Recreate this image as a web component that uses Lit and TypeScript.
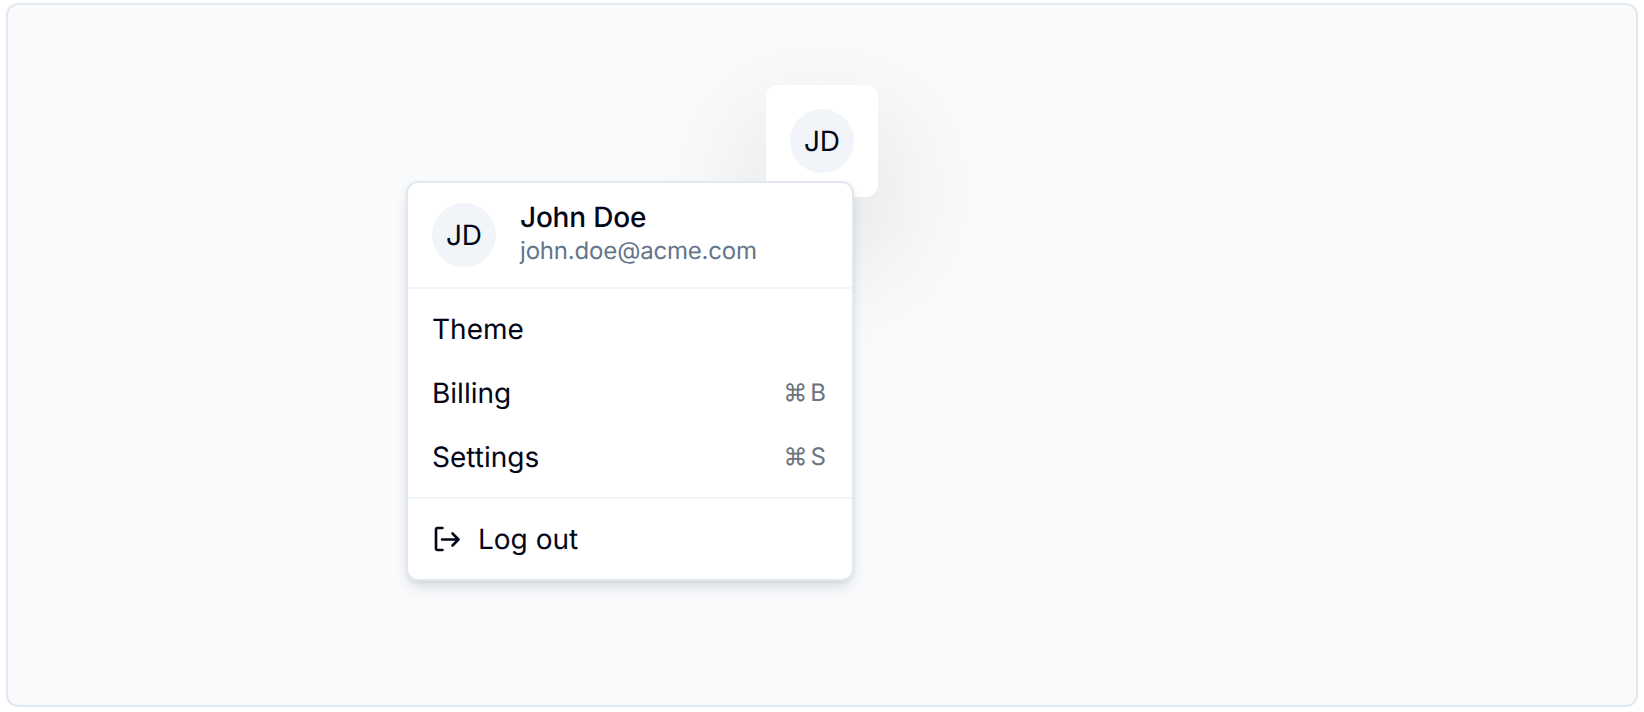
import { LitElement, html, css } from 'lit';
import { customElement } from 'lit/decorators.js';

@customElement('app-root')
export class AppRoot extends LitElement {
    static styles = css`
    :host {
      display: block;
      height: 712px;
      padding: 3px 6px 0;
      box-sizing: border-box;
      font-family: Inter, sans-serif;
      color: #020617;
      text-rendering: geometricPrecision;
    }
    .frame {
      height: 704px;
      box-sizing: border-box;
      background: #f8fafc;
      border: 2px solid #e2e8f0;
      border-radius: 12px;
      display: flex;
      justify-content: center;
      padding-top: 80px;
    }
    .anchor {
      position: relative;
      width: 112px;
      height: 112px;
    }
    .trigger {
      box-sizing: border-box;
      width: 112px;
      height: 112px;
      padding: 24px;
      background: #fff;
      border-radius: 12px;
      box-shadow: 0 50px 130px -8px rgba(0, 0, 0, 0.2);
    }
    .avatar {
      width: 64px;
      height: 64px;
      flex: none;
      border-radius: 50%;
      background: #f1f5f9;
      display: flex;
      align-items: center;
      justify-content: center;
      font-size: 28px;
      line-height: 1;
    }
    .menu {
      position: absolute;
      top: 96px;
      right: 24px;
      width: 448px;
      box-sizing: border-box;
      background: #fff;
      border: 2px solid #e2e8f0;
      border-radius: 12px;
      box-shadow: 0 8px 16px -4px rgba(15, 23, 42, 0.15), 0 2px 4px rgba(15, 23, 42, 0.06);
      overflow: hidden;
    }
    .head {
      display: flex;
      align-items: center;
      gap: 24px;
      padding: 20px 24px;
    }
    .who {
      display: flex;
      flex-direction: column;
      gap: 4px;
    }
    .name {
      font-size: 28px;
      line-height: 28px;
      font-weight: 500;
      letter-spacing: -0.2px;
    }
    .mail {
      font-size: 24px;
      line-height: 32px;
      color: #64748b;
      letter-spacing: -0.18px;
    }
    .group {
      padding: 8px 0;
      border-top: 2px solid #f1f5f9;
    }
    .item {
      display: flex;
      align-items: center;
      justify-content: space-between;
      height: 64px;
      padding: 0 23px 0 24px;
      font-size: 28px;
    }
    .keys {
      font-size: 24px;
      color: #6b7280;
      letter-spacing: 3px;
      padding-bottom: 2px;
    }
    .logout {
      justify-content: flex-start;
      gap: 14px;
    }
    svg {
      display: block;
    }
    `;

    render() {
        return html`
      <div class="frame">
        <div class="anchor">
          <div class="trigger"><div class="avatar">JD</div></div>
          <div class="menu">
            <div class="head">
              <div class="avatar">JD</div>
              <div class="who">
                <span class="name">John Doe</span>
                <span class="mail">john.doe@acme.com</span>
              </div>
            </div>
            <div class="group">
              <div class="item"><span>Theme</span></div>
              <div class="item"><span>Billing</span><span class="keys">⌘B</span></div>
              <div class="item"><span>Settings</span><span class="keys">⌘S</span></div>
            </div>
            <div class="group">
              <div class="item logout">
                <svg width="32" height="32" viewBox="0 0 32 32" fill="none" stroke="#020617" stroke-width="2.6" stroke-linecap="round" stroke-linejoin="round">
                  <path d="M10.5 5H5.5a1.5 1.5 0 0 0-1.5 1.5v19a1.5 1.5 0 0 0 1.5 1.5h5" />
                  <path d="M10 16.5h16.5M20.5 10.5l6 6-6 6" />
                </svg>
                <span>Log out</span>
              </div>
            </div>
          </div>
        </div>
      </div>
    `;
    }
}
